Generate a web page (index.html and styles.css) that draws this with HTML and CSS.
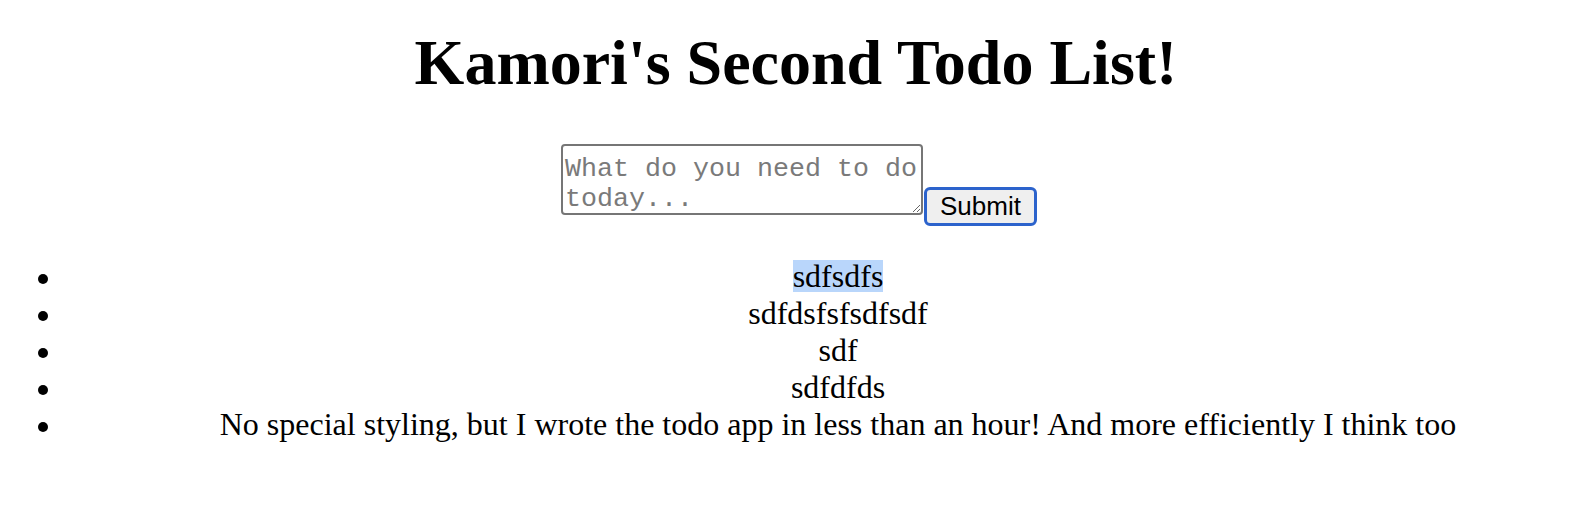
FILE: index.html
```html
<!DOCTYPE html>
<html lang="en">
<head>
<meta charset="utf-8">
<title>Kamori's Second Todo List!</title>
<link rel="stylesheet" href="styles.css">
</head>
<body>
<h1 class="title">Kamori's Second Todo List!</h1>
<form class="todo-form">
<textarea class="todo-input" placeholder="What do you need to do today..."></textarea><button type="button" class="submit-btn">Submit</button>
</form>
<ul class="todo-list">
<li class="todo-item"><span class="item-text"><span class="sel">sdfsdfs</span></span></li>
<li class="todo-item"><span class="item-text">sdfdsfsfsdfsdf</span></li>
<li class="todo-item"><span class="item-text">sdf</span></li>
<li class="todo-item"><span class="item-text">sdfdfds</span></li>
<li class="todo-item"><span class="item-text">No special styling, but I wrote the todo app in less than an hour! And more efficiently I think too</span></li>
</ul>
</body>
</html>
```

FILE: styles.css
```css
html, body {
  background: #ffffff;
}

body {
  margin: 0;
  font-family: "Liberation Serif", "Times New Roman", serif;
  color: #000000;
}

.title {
  margin: 26px 0 0;
  font-size: 64px;
  font-weight: bold;
  line-height: normal;
  text-align: center;
}

.todo-form {
  margin: 44px 0 0;
  display: flex;
  justify-content: center;
  align-items: flex-start;
  gap: 1px;
  padding-left: 6px;
}

.todo-input {
  box-sizing: border-box;
  width: 362px;
  height: 71px;
  margin: 0;
  padding: 8px 2px 0;
  border: 2px solid #767676;
  border-radius: 4px;
  font-family: "Liberation Mono", "Courier New", monospace;
  font-size: 26.67px;
  line-height: normal;
  color: #000000;
  background: #ffffff;
  overflow: hidden;
}

.todo-input::placeholder {
  color: #7a7a7a;
}

.submit-btn {
  box-sizing: border-box;
  width: 113px;
  height: 39px;
  margin: 43px 0 0;
  padding: 0;
  border: 3px solid #2c63cc;
  border-radius: 6px;
  background: #efefef;
  font-family: "Liberation Sans", Arial, sans-serif;
  font-size: 26px;
  color: #000000;
  line-height: normal;
}

.todo-list {
  list-style: none;
  margin: 31.5px 0 0;
  padding: 0 12px 0 0;
}

.todo-item {
  display: grid;
  grid-template-columns: 96px 1fr;
  align-items: start;
  font-size: 32px;
  line-height: normal;
}

.todo-item::before {
  content: "";
  width: 10px;
  height: 10px;
  margin: 16px 0 0 38px;
  border-radius: 50%;
  background: #000000;
}

.item-text {
  display: block;
  text-align: center;
}

.sel {
  background: linear-gradient(#b9d6fb, #b9d6fb) 0 2px / 100% 32px no-repeat;
}
```
